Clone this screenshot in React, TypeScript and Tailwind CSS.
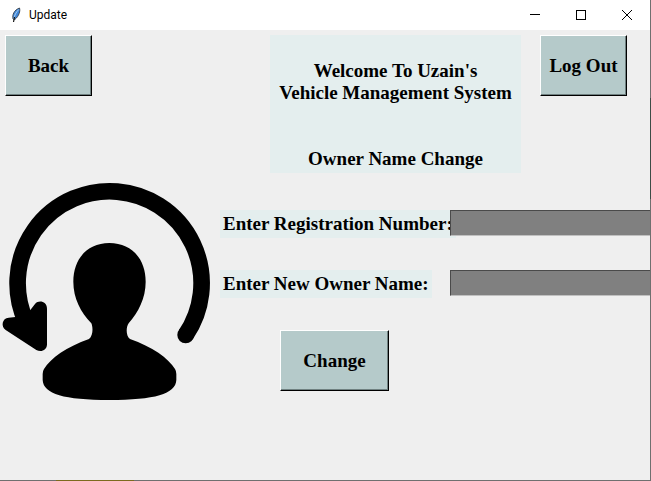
import type { ReactNode } from "react";

function FeatherIcon() {
  return (
    <svg width="16" height="16" viewBox="0 0 16 16" aria-hidden="true">
      <path d="M5 12C4 8 6 3 11.500 1C12.500 4 11 9 7 12.4Z" fill="#3f86d8" stroke="#2a3038" strokeWidth="0.8" />
      <path d="M10.6 2.6C8 5.500 6.500 8 5.800 12" stroke="#a9d0f2" strokeWidth="1" fill="none" />
      <path d="M6.500 10L5.500 15" stroke="#111" strokeWidth="1.2" fill="none" />
    </svg>
  );
}

function TitleBar() {
  return (
    <header className="flex h-[30px] items-center bg-white pl-2">
      <FeatherIcon />
      <h1 className="ml-[5px] font-['Roboto','Noto_Sans',sans-serif] text-[12px] leading-4 text-black">Update</h1>
      <div className="ml-auto flex h-full">
        <button type="button" aria-label="Minimize" className="flex w-[46px] items-center justify-center">
          <svg width="10" height="10" viewBox="0 0 10 10" shapeRendering="crispEdges">
            <path d="M0 4h10v1H0z" />
          </svg>
        </button>
        <button type="button" aria-label="Maximize" className="flex w-[46px] items-center justify-center">
          <svg width="10" height="10" viewBox="0 0 10 10" fill="none" stroke="#000" shapeRendering="crispEdges">
            <rect x="0.5" y="0.5" width="9" height="9" />
          </svg>
        </button>
        <button type="button" aria-label="Close" className="flex w-[46px] items-center justify-center">
          <svg width="10" height="10" viewBox="0 0 10 10" stroke="#000">
            <path d="M0 0L10 10M10 0L0 10" />
          </svg>
        </button>
      </div>
    </header>
  );
}

function RaisedButton({ children, className }: { children: ReactNode; className: string }) {
  return (
    <button
      type="button"
      className={`h-[61px] shrink-0 border border-t-white border-r-black border-b-black border-l-white bg-[#b5caca] font-bold shadow-[inset_-1px_-1px_0_#6f8080] ${className}`}
    >
      {children}
    </button>
  );
}

function ChangeUserIcon() {
  return (
    <svg width="220" height="240" viewBox="0 0 660 720" aria-hidden="true">
      <path d="M78 455A276 276 0 1 1 557 495" fill="none" stroke="#000" strokeWidth="50" />
      <circle cx="557" cy="495" r="25" />
      <path d="M46 441L91 420L105 402C117 388 141 395 141 416V523C141 541 123 548 109 540L17 480C2 470 6 444 26 443Z" />
      <path d="M328 219C395 219 437 267 437 335C437 385 415 426 386 460C378 472 377 496 390 507C456 530 506 565 525 597Q529 603 529 612V630C527 672 464 690 328 690C193 690 130 672 128 630V612Q128 603 132 597C151 565 201 530 267 507C280 496 279 472 274 460C242 426 220 385 220 335C220 267 262 219 328 219Z" />
    </svg>
  );
}

function Field({ id, label }: { id: string; label: string }) {
  return (
    <div className="grid h-[28px] grid-cols-[230px_1fr] items-start">
      <label htmlFor={id} className="justify-self-start bg-[#e4eeee] p-[3px] font-bold whitespace-nowrap">
        {label}
      </label>
      <input
        id={id}
        type="text"
        className="h-[26px] w-full min-w-0 border border-r-0 border-t-[#4a4a4a] border-b-[#c0c0c0] border-l-[#4a4a4a] bg-[#808080] px-1 outline-none"
      />
    </div>
  );
}

export default function App() {
  return (
    <div className="flex h-screen flex-col overflow-hidden bg-[#efefef]">
      <div className="flex min-h-0 flex-1">
        <div className="min-w-0 flex-1">
          <TitleBar />
          <main className="font-['Liberation_Serif',serif] text-[19px] leading-[22px] text-black">
            <div className="flex items-start pt-[5px] pr-[23px] pl-[5px]">
              <RaisedButton className="w-[87px]">Back</RaisedButton>
              <div className="mr-[19px] ml-auto w-[251px] bg-[#e4eeee] px-[3px] pt-[25px] pb-[3px] text-center font-bold">
                <h2>
                  Welcome To Uzain's
                  <br />
                  Vehicle Management System
                </h2>
                <h3 className="mt-11">Owner Name Change</h3>
              </div>
              <RaisedButton className="w-[87px]">Log Out</RaisedButton>
            </div>
            <div className="flex items-start">
              <div className="-mt-[3px] shrink-0">
                <ChangeUserIcon />
              </div>
              <form className="flex min-w-0 flex-1 flex-col gap-8 pt-[37px]">
                <Field id="registration" label="Enter Registration Number:" />
                <Field id="owner" label="Enter New Owner Name:" />
                <RaisedButton className="ml-[60px] w-[109px]">Change</RaisedButton>
              </form>
            </div>
          </main>
        </div>
        <div className="w-px bg-[#6f6f6f] pt-[98px]">
          <div className="h-[101px] bg-[#3c4c46]" />
        </div>
      </div>
      <div className="flex h-px bg-[#6f6f6f] pl-14">
        <div className="w-[78px] bg-[#7d6a1e]" />
      </div>
    </div>
  );
}
